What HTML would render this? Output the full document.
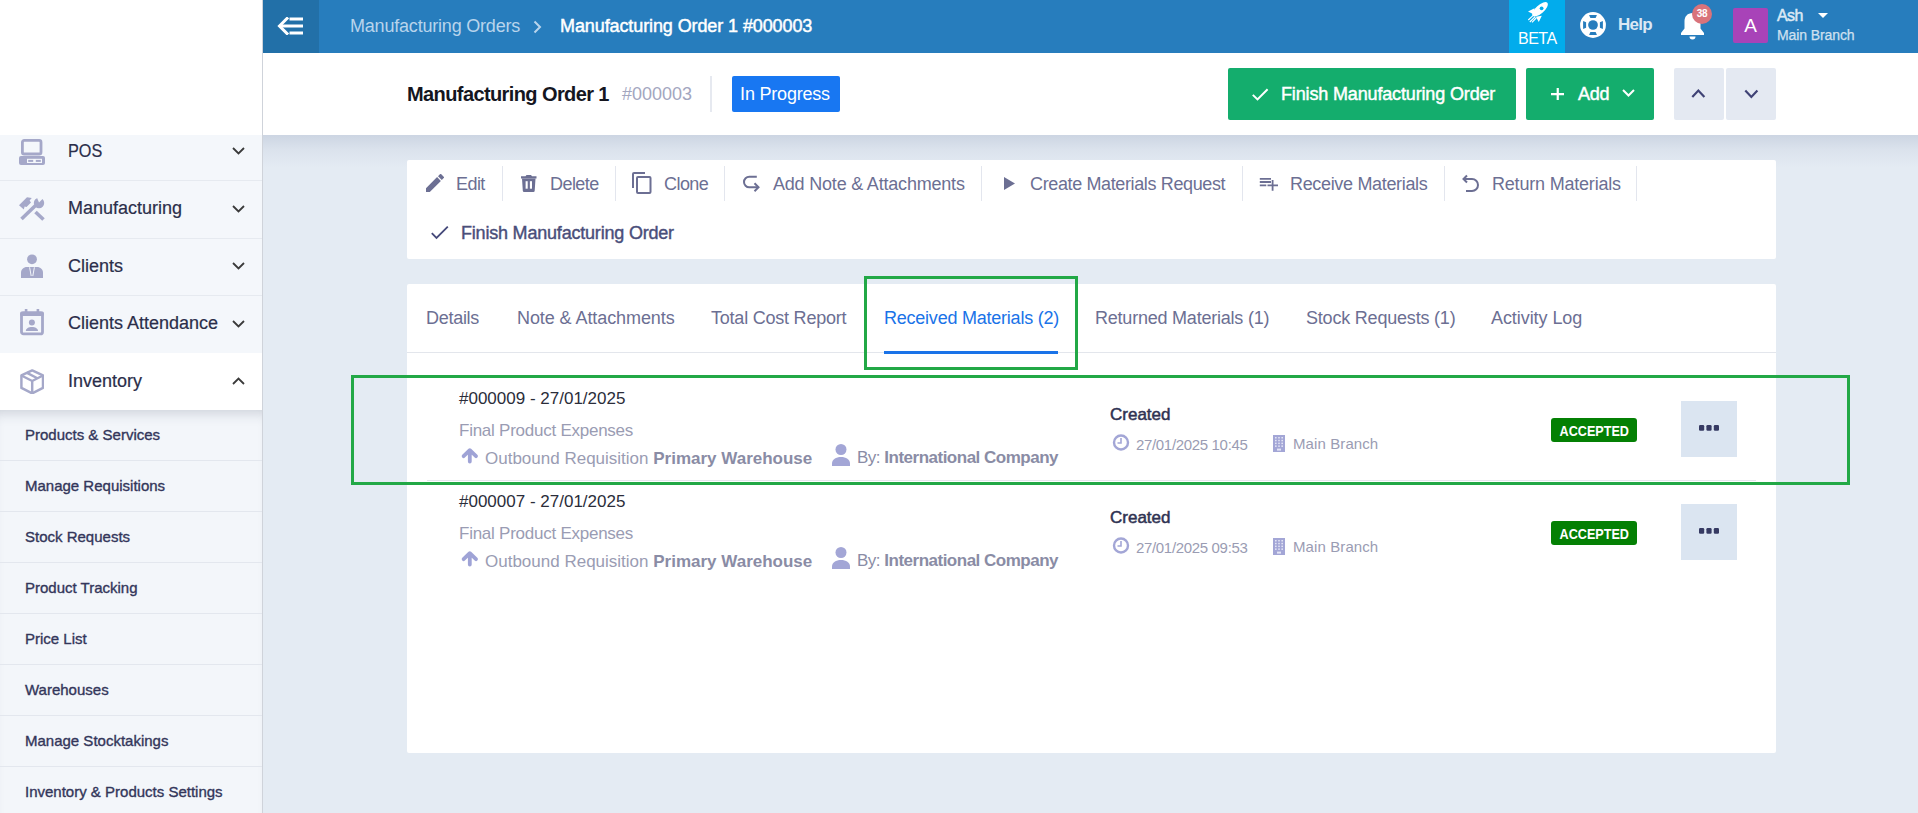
<!DOCTYPE html>
<html><head><meta charset="utf-8">
<style>
*{box-sizing:border-box;margin:0;padding:0}
html,body{width:1918px;height:813px;overflow:hidden;background:#e4ebf3;font-family:"Liberation Sans",sans-serif}
.abs{position:absolute}
#sidebar{position:absolute;left:0;top:0;width:263px;height:813px;background:#f4f7fb;border-right:1px solid #cfd3da}
#logo{position:absolute;left:0;top:0;width:262px;height:135px;background:#fff}
.mi{position:absolute;left:0;width:262px;height:57px;border-bottom:1px solid #e6eaf0;color:#2b2e4a;font-size:18px}
.mi .t{position:absolute;left:68px;top:calc(50% - 1px);transform:translateY(-50%);white-space:nowrap;-webkit-text-stroke:0.2px #2b2e4a}
.mi svg.ic{position:absolute;left:19px}
.mi svg.ch{position:absolute;left:232px;top:50%;margin-top:-4.5px}
.si{position:absolute;left:0;width:262px;height:51px;border-bottom:1px solid #e3e7ee;color:#33365a;font-size:15px;-webkit-text-stroke:0.35px #33365a}
.si .t{position:absolute;left:25px;top:16px;white-space:nowrap;letter-spacing:0px}
#topbar{position:absolute;left:263px;top:0;width:1655px;height:53px;background:#277dbd}
#back{position:absolute;left:0;top:0;width:56px;height:53px;background:#2270a8}
#header{position:absolute;left:263px;top:53px;width:1655px;height:82px;background:#fff}
#hshadow{position:absolute;left:263px;top:135px;width:1655px;height:32px;background:linear-gradient(rgba(110,125,160,.2),rgba(110,125,160,.08) 45%,rgba(110,125,160,0))}
.panel{position:absolute;background:#fff;border-radius:2px}
.act{position:absolute;top:174px;font-size:18px;color:#6c6f93;white-space:nowrap}
.div{position:absolute;top:166px;width:1px;height:35px;background:#e3e6ee}
.tab{position:absolute;top:308px;font-size:18px;color:#6c6f93;white-space:nowrap}
.ann{position:absolute;border:3px solid #22a846}
</style></head><body>

<div id="sidebar">
  <div id="logo"></div>
  <div class="mi" style="top:135px;height:46px">
    <svg class="ic" style="top:4px" width="26" height="26" viewBox="0 0 26 26"><rect x="3.4" y="1.4" width="18.6" height="13.6" rx="1.8" fill="none" stroke="#a5a8c9" stroke-width="2.8"/><rect x="0" y="17" width="26" height="9" rx="2" fill="#a5a8c9"/><rect x="8" y="19.8" width="15" height="4.2" fill="#f4f7fb"/><rect x="9.2" y="20.9" width="5" height="2" fill="#a5a8c9"/><rect x="16.8" y="20.9" width="5" height="2" fill="#a5a8c9"/></svg>
    <span class="t" style="top:6px;transform:scaleX(.9);transform-origin:left top">POS</span>
    <svg class="ch" style="top:auto;margin-top:0;top:12px" width="13" height="8" viewBox="0 0 13 8"><path d="M1 1l5.5 5.5L12 1" fill="none" stroke="#3a3a3a" stroke-width="1.8"/></svg>
  </div>
  <div class="mi" style="top:181px;height:57.5px">
    <svg class="ic" style="left:14px;top:9px" width="36" height="36" viewBox="0 0 36 36"><path d="M7.5 29L21.5 15.5" stroke="#a5a8c9" stroke-width="3.6"/><path d="M21.5 22L29.5 29.5" stroke="#a5a8c9" stroke-width="3.6"/><circle cx="25" cy="13" r="5.2" fill="#a5a8c9"/><path d="M25 12.5L29.5 8l-1.5-1.5h-3l-1.8 1.8z" fill="#f4f7fb"/><path d="M5 15.2L13 7.3 17.8 7.9 15.6 10.5 17 12.5 12.5 17 10.6 16.5 9.8 19.6z" fill="#a5a8c9"/></svg>
    <span class="t">Manufacturing</span>
    <svg class="ch" width="13" height="8" viewBox="0 0 13 8"><path d="M1 1l5.5 5.5L12 1" fill="none" stroke="#3a3a3a" stroke-width="1.8"/></svg>
  </div>
  <div class="mi" style="top:238.5px;height:57.5px">
    <svg class="ic" style="top:15px" width="26" height="26" viewBox="0 0 26 26"><circle cx="13" cy="5.3" r="4.9" fill="#a5a8c9"/><path d="M2 24v-5.5C2 15.5 4.5 13 8 13h10c3.5 0 6 2.5 6 5.5V24z" fill="#a5a8c9"/><path d="M10.6 13.3L12.2 22M15.4 13.3L13.8 22" stroke="#f4f7fb" stroke-width="1"/></svg>
    <span class="t">Clients</span>
    <svg class="ch" width="13" height="8" viewBox="0 0 13 8"><path d="M1 1l5.5 5.5L12 1" fill="none" stroke="#3a3a3a" stroke-width="1.8"/></svg>
  </div>
  <div class="mi" style="top:296px;height:57.5px">
    <svg class="ic" style="top:13px" width="26" height="28" viewBox="0 0 26 28"><rect x="2.5" y="4" width="21" height="20.9" rx="2" fill="none" stroke="#a5a8c9" stroke-width="2.8"/><rect x="1.1" y="2.6" width="23.8" height="4.4" rx="1.5" fill="#a5a8c9"/><rect x="5.8" y="0" width="2.6" height="4" fill="#a5a8c9"/><rect x="17.6" y="0" width="2.6" height="4" fill="#a5a8c9"/><circle cx="12.9" cy="13.5" r="3" fill="#a5a8c9"/><path d="M6.8 22C6.8 19.5 9.6 18 12.9 18S19 19.5 19 22z" fill="#a5a8c9"/></svg>
    <span class="t">Clients Attendance</span>
    <svg class="ch" width="13" height="8" viewBox="0 0 13 8"><path d="M1 1l5.5 5.5L12 1" fill="none" stroke="#3a3a3a" stroke-width="1.8"/></svg>
  </div>
  <div class="mi" style="top:353px;height:57px;background:#fff;border-bottom:none">
    <svg class="ic" style="left:20px;top:15.5px" width="24.4" height="25.8" viewBox="0 0 26 28" preserveAspectRatio="none"><path d="M13 1.5L24.5 7v13.5L13 26.5 1.5 20.5V7z" fill="none" stroke="#a5a8c9" stroke-width="2.6" stroke-linejoin="round"/><path d="M1.5 7L13 13l11.5-6M13 13v13.5M7 4l11.5 6" fill="none" stroke="#a5a8c9" stroke-width="2.6"/></svg>
    <span class="t">Inventory</span>
    <svg class="ch" width="13" height="8" viewBox="0 0 13 8"><path d="M1 7l5.5-5.5L12 7" fill="none" stroke="#3a3a3a" stroke-width="1.8"/></svg>
  </div>
  <div style="position:absolute;left:0;top:410px;width:262px;height:403px;background:#f3f6fa;box-shadow:inset 0 12px 14px -10px rgba(40,50,80,.22)"></div>
  <div class="si" style="top:410px"><span class="t">Products &amp; Services</span></div>
  <div class="si" style="top:461px"><span class="t">Manage Requisitions</span></div>
  <div class="si" style="top:512px"><span class="t">Stock Requests</span></div>
  <div class="si" style="top:563px"><span class="t">Product Tracking</span></div>
  <div class="si" style="top:614px"><span class="t">Price List</span></div>
  <div class="si" style="top:665px"><span class="t">Warehouses</span></div>
  <div class="si" style="top:716px"><span class="t">Manage Stocktakings</span></div>
  <div class="si" style="top:767px"><span class="t">Inventory &amp; Products Settings</span></div>
</div>

<div id="topbar">
  <div id="back">
    <svg style="position:absolute;left:14px;top:17px" width="27" height="18" viewBox="0 0 27 18"><path d="M10 1.5L2.5 9l7.5 7.5" fill="none" stroke="#fff" stroke-width="3" stroke-linecap="square"/><path d="M3 9h23M12.5 2h13.5M12.5 16h13.5" stroke="#fff" stroke-width="3"/></svg>
  </div>
  <span class="abs" style="left:87px;top:16px;font-size:18px;color:#b8d4ec;white-space:nowrap;letter-spacing:-0.2px">Manufacturing Orders</span>
  <svg class="abs" style="left:270px;top:20px" width="9" height="14" viewBox="0 0 9 14"><path d="M1.5 1.5l5.5 5.5-5.5 5.5" fill="none" stroke="#b8d4ec" stroke-width="2"/></svg>
  <span class="abs" style="left:297px;top:16px;font-size:18px;color:#fff;white-space:nowrap;letter-spacing:-0.1px;-webkit-text-stroke:0.45px #fff">Manufacturing Order 1 #000003</span>
  <div class="abs" style="left:1246px;top:0;width:56px;height:53px;background:#02acec">
    <svg class="abs" style="left:11px;top:0" width="30" height="25" viewBox="0 0 30 25"><ellipse cx="20" cy="9.3" rx="9.8" ry="4.1" transform="rotate(-41.4 20 9.3)" fill="#fff"/><circle cx="21.6" cy="8.3" r="1.9" fill="#02acec"/><path d="M8 11.4L14.5 8.2 13.5 14.2z M18.8 22.1L21.8 15.8 15.8 16.8z" fill="#fff"/><path d="M8.3 20L13.8 14.8M9.8 22L15.2 16.6M12 22.3L16.2 18" stroke="#fff" stroke-width="1.1"/></svg>
    <span class="abs" style="left:9px;top:29px;font-size:16px;color:#fff;white-space:nowrap;letter-spacing:-0.5px;margin-top:1px">BETA</span>
  </div>
  <svg class="abs" style="left:1317px;top:11.6px" width="26" height="26" viewBox="-13 -13 26 26"><circle r="12.9" fill="#fff"/><circle r="4.85" fill="#277dbd"/><g fill="#277dbd"><path d="M-3.9-9.9H3.9L2.65-6.9H-2.65z"/><path d="M-3.9-9.9H3.9L2.65-6.9H-2.65z" transform="rotate(90)"/><path d="M-3.9-9.9H3.9L2.65-6.9H-2.65z" transform="rotate(180)"/><path d="M-3.9-9.9H3.9L2.65-6.9H-2.65z" transform="rotate(270)"/></g></svg>
  <span class="abs" style="left:1355px;top:15px;font-size:17px;color:#dbe8f4;font-weight:bold;white-space:nowrap;letter-spacing:-0.7px">Help</span>
  <svg class="abs" style="left:1417px;top:11px" width="25" height="29" viewBox="0 0 25 29"><path d="M12.5 2c-5 0-8 3.5-8 8.5v7L1 22v2h23v-2l-3.5-4.5v-7c0-5-3-8.5-8-8.5z" fill="#fff"/><path d="M9.5 25.5a3 3 0 0 0 6 0z" fill="#fff"/></svg>
  <div class="abs" style="left:1429px;top:4px;width:20px;height:20px;border-radius:50%;background:#d9737b;color:#fff;font-size:10px;font-weight:bold;letter-spacing:-0.3px;text-align:center;line-height:20px">38</div>
  <div class="abs" style="left:1470px;top:8px;width:35px;height:35px;background:#a843b8;border-radius:2px;color:#fff;font-size:19px;text-align:center;line-height:35px">A</div>
  <span class="abs" style="left:1514px;top:7px;font-size:16px;color:#dce9f5;white-space:nowrap;letter-spacing:-0.6px;-webkit-text-stroke:0.5px #dce9f5">Ash</span>
  <svg class="abs" style="left:1555px;top:13px" width="10" height="5" viewBox="0 0 10 5"><path d="M0 0h10L5 5z" fill="#fff"/></svg>
  <span class="abs" style="left:1514px;top:27px;font-size:14px;color:#cfe0f0;white-space:nowrap;letter-spacing:-0.1px;-webkit-text-stroke:0.25px #cfe0f0">Main Branch</span>
</div>

<div id="hshadow"></div>
<div id="header">
  <span class="abs" style="left:144px;top:30px;font-size:20px;font-weight:bold;color:#15161f;white-space:nowrap;letter-spacing:-0.6px">Manufacturing Order 1</span>
  <span class="abs" style="left:359px;top:31px;font-size:18px;color:#a3a6bf;white-space:nowrap">#000003</span>
  <div class="abs" style="left:447px;top:23px;width:2px;height:36px;background:#e6e9f0"></div>
  <div class="abs" style="left:469px;top:23px;width:108px;height:36px;background:#1877f2;border-radius:2px;color:#fff;font-size:18px;text-align:center;line-height:36px;white-space:nowrap;letter-spacing:-0.2px;padding-right:2px">In Progress</div>
  <div class="abs" style="left:965px;top:15px;width:288px;height:52px;background:#14ad6d;border-radius:2px"></div>
  <svg class="abs" style="left:989px;top:35px" width="17" height="13" viewBox="0 0 17 13"><path d="M0.8 6.9L5.5 11.4L15.6 1.2" fill="none" stroke="#fff" stroke-width="2"/></svg>
  <span class="abs" style="left:1018px;top:31px;font-size:18px;color:#fff;white-space:nowrap;letter-spacing:-0.15px;-webkit-text-stroke:0.45px #fff">Finish Manufacturing Order</span>
  <div class="abs" style="left:1263px;top:15px;width:128px;height:52px;background:#14ad6d;border-radius:2px"></div>
  <svg class="abs" style="left:1287.5px;top:35px" width="13.5" height="12.4" viewBox="0 0 13.5 12.4"><path d="M6.75 0v12.4M0 6.2h13.5" stroke="#fff" stroke-width="2.2"/></svg>
  <span class="abs" style="left:1315px;top:31px;font-size:18px;color:#fff;white-space:nowrap;letter-spacing:-0.3px;-webkit-text-stroke:0.45px #fff">Add</span>
  <svg class="abs" style="left:1359px;top:36px" width="13" height="8" viewBox="0 0 13 8"><path d="M1 1l5.5 5.5L12 1" fill="none" stroke="#fff" stroke-width="2"/></svg>
  <div class="abs" style="left:1411px;top:15px;width:50px;height:52px;background:#e4e9f2;border-radius:2px"></div>
  <div class="abs" style="left:1463px;top:15px;width:50px;height:52px;background:#e4e9f2;border-radius:2px"></div>
  <svg class="abs" style="left:1428px;top:35px" width="15" height="11" viewBox="0 0 15 11"><path d="M1.3 8.9L7.35 2.6L13.4 8.9" fill="none" stroke="#3f4275" stroke-width="2.2"/></svg>
  <svg class="abs" style="left:1480.5px;top:36px" width="15" height="11" viewBox="0 0 15 11"><path d="M1.3 1.6L7.35 7.9L13.4 1.6" fill="none" stroke="#3f4275" stroke-width="2.2"/></svg>
</div>

<div class="panel" style="left:407px;top:160px;width:1369px;height:99px">
  <svg class="abs" style="left:19px;top:14px" width="18" height="18" viewBox="0 0 18 18"><path d="M0 14.2V18h3.8L14.9 6.9l-3.8-3.8zM17.7 4.1a1 1 0 0 0 0-1.4L15.3.3a1 1 0 0 0-1.4 0l-1.9 1.9 3.8 3.8z" fill="#6c6f93"/></svg>
  <span class="abs" style="left:49px;top:14px;font-size:18px;color:#6c6f93;white-space:nowrap;letter-spacing:-0.57px">Edit</span>
  <div class="abs" style="left:95px;top:6px;width:1px;height:35px;background:#e3e6ee"></div>
  <svg class="abs" style="left:114px;top:15px" width="16" height="17" viewBox="0 0 16 17"><path d="M0 1.2h4.5L5.5 0h4.5l1 1.2h4.5v2.3H0z" fill="#6c6f93"/><path d="M1 3.5h13.5L13.7 15.8a1.3 1.3 0 0 1-1.3 1.2H3.1a1.3 1.3 0 0 1-1.3-1.2z" fill="#6c6f93"/><rect x="4.6" y="6.2" width="2.1" height="7.5" fill="#fff"/><rect x="8.9" y="6.2" width="2.1" height="7.5" fill="#fff"/></svg>
  <span class="abs" style="left:143px;top:14px;font-size:18px;color:#6c6f93;white-space:nowrap;letter-spacing:-0.56px">Delete</span>
  <div class="abs" style="left:208px;top:6px;width:1px;height:35px;background:#e3e6ee"></div>
  <svg class="abs" style="left:225px;top:12px" width="20" height="22" viewBox="0 0 20 22"><path d="M1 16V2a1 1 0 0 1 1-1h11" fill="none" stroke="#6c6f93" stroke-width="2"/><rect x="5" y="5" width="13.5" height="16" rx="1" fill="none" stroke="#6c6f93" stroke-width="2"/></svg>
  <span class="abs" style="left:257px;top:14px;font-size:18px;color:#6c6f93;white-space:nowrap;letter-spacing:-0.55px">Clone</span>
  <div class="abs" style="left:317px;top:6px;width:1px;height:35px;background:#e3e6ee"></div>
  <svg class="abs" style="left:336px;top:15px" width="17" height="18" viewBox="0 0 17 18"><path d="M13.8 1.7H6.3a5.3 5.3 0 0 0 0 10.6H15" fill="none" stroke="#6c6f93" stroke-width="2"/><path d="M11.5 8.3l4 4-4 4" fill="none" stroke="#6c6f93" stroke-width="2"/></svg>
  <span class="abs" style="left:366px;top:14px;font-size:18px;color:#6c6f93;white-space:nowrap;letter-spacing:-0.2px">Add Note &amp; Attachments</span>
  <div class="abs" style="left:574px;top:6px;width:1px;height:35px;background:#e3e6ee"></div>
  <svg class="abs" style="left:597px;top:17px" width="11" height="13" viewBox="0 0 11 13"><path d="M0 0l11 6.5L0 13z" fill="#6c6f93"/></svg>
  <span class="abs" style="left:623px;top:14px;font-size:18px;color:#6c6f93;white-space:nowrap;letter-spacing:-0.37px">Create Materials Request</span>
  <div class="abs" style="left:835px;top:6px;width:1px;height:35px;background:#e3e6ee"></div>
  <svg class="abs" style="left:852px;top:17px" width="20" height="15" viewBox="0 0 20 15"><path d="M0.8 1.8H12M0.8 5H12M0.8 8.3H7.3M13.6 3v10.8M8.5 8.3H19" stroke="#6c6f93" stroke-width="1.8"/></svg>
  <span class="abs" style="left:883px;top:14px;font-size:18px;color:#6c6f93;white-space:nowrap;letter-spacing:-0.33px">Receive Materials</span>
  <div class="abs" style="left:1037px;top:6px;width:1px;height:35px;background:#e3e6ee"></div>
  <svg class="abs" style="left:1055px;top:14px" width="18" height="19" viewBox="0 0 18 19"><path d="M5 1.5L1.5 5 5 8.5" fill="none" stroke="#6c6f93" stroke-width="2"/><path d="M2 5h8a6 6 0 0 1 0 12H4" fill="none" stroke="#6c6f93" stroke-width="2"/></svg>
  <span class="abs" style="left:1085px;top:14px;font-size:18px;color:#6c6f93;white-space:nowrap;letter-spacing:-0.2px">Return Materials</span>
  <div class="abs" style="left:1229px;top:6px;width:1px;height:35px;background:#e3e6ee"></div>
  <svg class="abs" style="left:24px;top:66px" width="18" height="14" viewBox="0 0 18 14"><path d="M0.8 7.2L5.5 12L16.8 0.7" fill="none" stroke="#45497a" stroke-width="1.8"/></svg>
  <span class="abs" style="left:54px;top:63px;font-size:18px;color:#4a4e7a;white-space:nowrap;letter-spacing:-0.2px;-webkit-text-stroke:0.4px #4a4e7a">Finish Manufacturing Order</span>
</div>
<div class="panel" style="left:407px;top:284px;width:1369px;height:469px">
  <span class="abs" style="left:19px;top:24px;font-size:18px;color:#6c6f93;white-space:nowrap;letter-spacing:-0.28px">Details</span>
  <span class="abs" style="left:110px;top:24px;font-size:18px;color:#6c6f93;white-space:nowrap;letter-spacing:-0.08px">Note &amp; Attachments</span>
  <span class="abs" style="left:304px;top:24px;font-size:18px;color:#6c6f93;white-space:nowrap;letter-spacing:-0.22px">Total Cost Report</span>
  <span class="abs" style="left:477px;top:24px;font-size:18px;color:#1a73e8;white-space:nowrap;letter-spacing:-0.23px">Received Materials (2)</span>
  <span class="abs" style="left:688px;top:24px;font-size:18px;color:#6c6f93;white-space:nowrap;letter-spacing:-0.22px">Returned Materials (1)</span>
  <span class="abs" style="left:899px;top:24px;font-size:18px;color:#6c6f93;white-space:nowrap;letter-spacing:-0.2px">Stock Requests (1)</span>
  <span class="abs" style="left:1084px;top:24px;font-size:18px;color:#6c6f93;white-space:nowrap;letter-spacing:-0.07px">Activity Log</span>
  <div class="abs" style="left:0;top:68px;width:1369px;height:1px;background:#e3e6ec"></div>
  <div class="abs" style="left:477px;top:67px;width:174px;height:3px;background:#1a73e8"></div>
  <div class="abs" style="left:20px;top:196px;width:1329px;height:1px;background:#e3e6ec"></div>
  <span class="abs" style="left:52px;top:103px;font-size:17px;color:#2b2d3a;white-space:nowrap;margin-top:2px">#000009 - 27/01/2025</span>
  <span class="abs" style="left:52px;top:137px;font-size:17px;color:#9a9cb3;white-space:nowrap;letter-spacing:-0.25px">Final Product Expenses</span>
  <svg class="abs" style="left:53px;top:162px" width="20" height="20" viewBox="0 0 20 20"><path d="M3.6 10.2L9.8 4.2L16 10.2M9.8 5v10.6" fill="none" stroke="#9fa3d6" stroke-width="3.8" stroke-linecap="round" stroke-linejoin="round"/></svg>
  <span class="abs" style="left:78px;top:165px;font-size:17px;color:#9a9cb3;white-space:nowrap">Outbound Requisition <b style="color:#8a8ca5">Primary Warehouse</b></span>
  <svg class="abs" style="left:424px;top:160px" width="20" height="22" viewBox="0 0 20 22"><circle cx="10" cy="5.5" r="5.5" fill="#a3a6d6"/><path d="M1 22v-2.5C1 15.5 5 13 10 13s9 2.5 9 6.5V22z" fill="#a3a6d6"/></svg>
  <span class="abs" style="left:450px;top:164px;font-size:17px;color:#8a8ca5;white-space:nowrap;letter-spacing:-0.5px">By: <b>International Company</b></span>
  <span class="abs" style="left:703px;top:119px;font-size:17px;color:#2f3252;white-space:nowrap;letter-spacing:0px;margin-top:2px;-webkit-text-stroke:0.5px #2f3252">Created</span>
  <svg class="abs" style="left:704px;top:149px" width="20" height="20" viewBox="0 0 20 20"><circle cx="10" cy="9.5" r="7" fill="none" stroke="#a3a6d6" stroke-width="2.4"/><path d="M10 5v5H6.5" fill="none" stroke="#a3a6d6" stroke-width="1.6"/></svg>
  <span class="abs" style="left:729px;top:152px;font-size:15px;color:#9a9cb3;white-space:nowrap;letter-spacing:-0.33px">27/01/2025 10:45</span>
  <svg class="abs" style="left:865px;top:151px" width="14" height="17" viewBox="0 0 14 17"><rect x="1" y="0" width="12" height="17" fill="#a3a6d6"/><g fill="#e4e5f5"><rect x="3" y="2" width="1.6" height="1.5"/><rect x="6.2" y="2" width="1.6" height="1.5"/><rect x="9.4" y="2" width="1.6" height="1.5"/><rect x="3" y="4.8" width="1.6" height="1.5"/><rect x="6.2" y="4.8" width="1.6" height="1.5"/><rect x="9.4" y="4.8" width="1.6" height="1.5"/><rect x="3" y="7.6" width="1.6" height="1.5"/><rect x="6.2" y="7.6" width="1.6" height="1.5"/><rect x="9.4" y="7.6" width="1.6" height="1.5"/><rect x="3" y="10.4" width="1.6" height="1.5"/><rect x="6.2" y="10.4" width="1.6" height="1.5"/><rect x="9.4" y="10.4" width="1.6" height="1.5"/><rect x="5" y="13.6" width="4" height="2"/></g></svg>
  <span class="abs" style="left:886px;top:151px;font-size:15px;color:#9a9cb3;white-space:nowrap;letter-spacing:0.1px">Main Branch</span>
  <div class="abs" style="left:1144px;top:134px;width:86px;height:24px;background:#048004;border-radius:3px;color:#fff;font-size:14px;font-weight:bold;text-align:center;line-height:24px"><span style="display:inline-block;transform:scaleX(.84);font-size:15px;position:relative;top:1px">ACCEPTED</span></div>
  <div class="abs" style="left:1274px;top:117px;width:56px;height:56px;background:#dbe5f1"></div>
  <svg class="abs" style="left:1291px;top:140px" width="22" height="7" viewBox="0 0 22 7"><rect x="1" y="1" width="5.2" height="5.8" rx="1.2" fill="#363a63"/><rect x="8.4" y="1" width="5.2" height="5.8" rx="1.2" fill="#363a63"/><rect x="15.8" y="1" width="5.2" height="5.8" rx="1.2" fill="#363a63"/></svg>
  <span class="abs" style="left:52px;top:206px;font-size:17px;color:#2b2d3a;white-space:nowrap;margin-top:2px">#000007 - 27/01/2025</span>
  <span class="abs" style="left:52px;top:240px;font-size:17px;color:#9a9cb3;white-space:nowrap;letter-spacing:-0.25px">Final Product Expenses</span>
  <svg class="abs" style="left:53px;top:265px" width="20" height="20" viewBox="0 0 20 20"><path d="M3.6 10.2L9.8 4.2L16 10.2M9.8 5v10.6" fill="none" stroke="#9fa3d6" stroke-width="3.8" stroke-linecap="round" stroke-linejoin="round"/></svg>
  <span class="abs" style="left:78px;top:268px;font-size:17px;color:#9a9cb3;white-space:nowrap">Outbound Requisition <b style="color:#8a8ca5">Primary Warehouse</b></span>
  <svg class="abs" style="left:424px;top:263px" width="20" height="22" viewBox="0 0 20 22"><circle cx="10" cy="5.5" r="5.5" fill="#a3a6d6"/><path d="M1 22v-2.5C1 15.5 5 13 10 13s9 2.5 9 6.5V22z" fill="#a3a6d6"/></svg>
  <span class="abs" style="left:450px;top:267px;font-size:17px;color:#8a8ca5;white-space:nowrap;letter-spacing:-0.5px">By: <b>International Company</b></span>
  <span class="abs" style="left:703px;top:222px;font-size:17px;color:#2f3252;white-space:nowrap;letter-spacing:0px;margin-top:2px;-webkit-text-stroke:0.5px #2f3252">Created</span>
  <svg class="abs" style="left:704px;top:252px" width="20" height="20" viewBox="0 0 20 20"><circle cx="10" cy="9.5" r="7" fill="none" stroke="#a3a6d6" stroke-width="2.4"/><path d="M10 5v5H6.5" fill="none" stroke="#a3a6d6" stroke-width="1.6"/></svg>
  <span class="abs" style="left:729px;top:255px;font-size:15px;color:#9a9cb3;white-space:nowrap;letter-spacing:-0.33px">27/01/2025 09:53</span>
  <svg class="abs" style="left:865px;top:254px" width="14" height="17" viewBox="0 0 14 17"><rect x="1" y="0" width="12" height="17" fill="#a3a6d6"/><g fill="#e4e5f5"><rect x="3" y="2" width="1.6" height="1.5"/><rect x="6.2" y="2" width="1.6" height="1.5"/><rect x="9.4" y="2" width="1.6" height="1.5"/><rect x="3" y="4.8" width="1.6" height="1.5"/><rect x="6.2" y="4.8" width="1.6" height="1.5"/><rect x="9.4" y="4.8" width="1.6" height="1.5"/><rect x="3" y="7.6" width="1.6" height="1.5"/><rect x="6.2" y="7.6" width="1.6" height="1.5"/><rect x="9.4" y="7.6" width="1.6" height="1.5"/><rect x="3" y="10.4" width="1.6" height="1.5"/><rect x="6.2" y="10.4" width="1.6" height="1.5"/><rect x="9.4" y="10.4" width="1.6" height="1.5"/><rect x="5" y="13.6" width="4" height="2"/></g></svg>
  <span class="abs" style="left:886px;top:254px;font-size:15px;color:#9a9cb3;white-space:nowrap;letter-spacing:0.1px">Main Branch</span>
  <div class="abs" style="left:1144px;top:237px;width:86px;height:24px;background:#048004;border-radius:3px;color:#fff;font-size:14px;font-weight:bold;text-align:center;line-height:24px"><span style="display:inline-block;transform:scaleX(.84);font-size:15px;position:relative;top:1px">ACCEPTED</span></div>
  <div class="abs" style="left:1274px;top:220px;width:56px;height:56px;background:#dbe5f1"></div>
  <svg class="abs" style="left:1291px;top:243px" width="22" height="7" viewBox="0 0 22 7"><rect x="1" y="1" width="5.2" height="5.8" rx="1.2" fill="#363a63"/><rect x="8.4" y="1" width="5.2" height="5.8" rx="1.2" fill="#363a63"/><rect x="15.8" y="1" width="5.2" height="5.8" rx="1.2" fill="#363a63"/></svg>
</div>
<div class="ann" style="left:864px;top:276px;width:214px;height:94px"></div>
<div class="ann" style="left:351px;top:375px;width:1499px;height:110px"></div>

</body></html>
